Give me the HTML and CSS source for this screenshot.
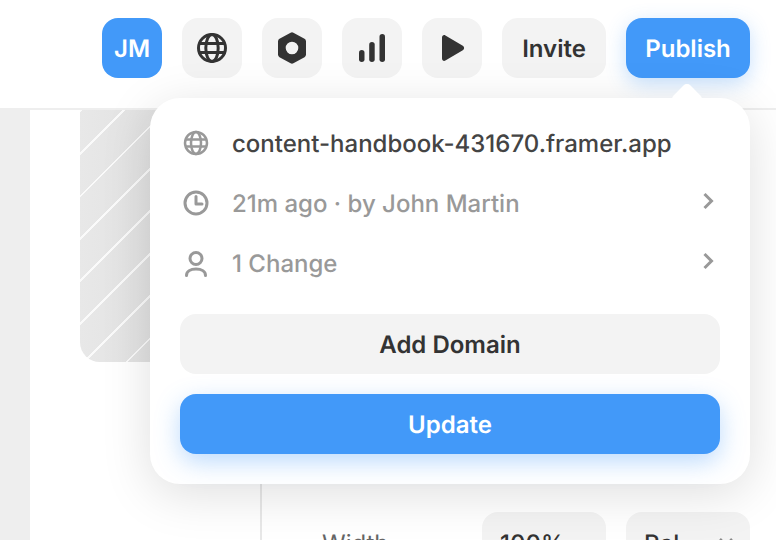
FILE: index.html
```html
<!DOCTYPE html>
<html lang="en">
<head>
<meta charset="utf-8">
<title>Publish</title>
<link rel="stylesheet" href="styles.css">
</head>
<body>
<div class="app">
  <header class="topbar">
    <div class="btn square avatar">JM</div>
    <div class="btn square"><svg width="32" height="32" viewBox="0 0 32 32" fill="none" stroke="#333" stroke-width="3"><circle cx="16" cy="16" r="13.5"/><ellipse cx="16" cy="16" rx="6.2" ry="13.5"/><path d="M3 11.5h26M3 20.5h26"/></svg></div>
    <div class="btn square"><svg width="32" height="32" viewBox="0 0 32 32"><path fill="#333" fill-rule="evenodd" d="M14.6 0.7a3 3 0 0 1 2.800 0l11.100 6.100a3 3 0 0 1 1.500 2.600v13.200a3 3 0 0 1-1.500 2.600l-11.100 6.100a3 3 0 0 1-2.800 0L3.500 25.200A3 3 0 0 1 2 22.600V9.400a3 3 0 0 1 1.500-2.600zM16 9.700a6.300 6.300 0 1 0 0 12.600 6.300 6.300 0 0 0 0-12.600z"/></svg></div>
    <div class="btn square"><svg width="32" height="32" viewBox="0 0 32 32" fill="#333"><rect x="3" y="18" width="5.500" height="12" rx="2.750"/><rect x="13.200" y="10" width="5.500" height="20" rx="2.750"/><rect x="23.500" y="2" width="5.500" height="28" rx="2.750"/></svg></div>
    <div class="btn square"><svg width="32" height="32" viewBox="0 0 32 32"><path fill="#333" d="M6 5.500c0-2 1.800-3 3.400-2.100l17.400 10.400a2.500 2.500 0 0 1 0 4.400L9.400 28.600C7.800 29.500 6 28.500 6 26.500z"/></svg></div>
    <div class="btn invite">Invite</div>
    <div class="btn publish">Publish</div>
  </header>

  <main class="workspace">
    <div class="gutter"></div>
    <section class="canvas"><div class="hatch"></div></section>
    <aside class="inspector">
      <div class="field-row">
        <span class="field-label">Width</span>
        <div class="field">100%</div>
        <div class="field select">Rel<svg class="select-arrow" width="16" height="16" viewBox="0 0 16 16" fill="none" stroke="#888" stroke-width="2.500"><path d="M2 5l6 6 6-6"/></svg></div>
      </div>
    </aside>
  </main>

  <div class="popover">
    <span class="caret"></span>
    <div class="info-row">
      <svg class="row-icon" width="28" height="28" viewBox="0 0 28 28" fill="none" stroke="#999" stroke-width="2.500"><circle cx="14" cy="14" r="11"/><ellipse cx="14" cy="14" rx="5" ry="11"/><path d="M3 10.500h22M3 17.500h22"/></svg>
      <span class="url">content-handbook-431670.framer.app</span>
    </div>
    <div class="info-row muted">
      <svg class="row-icon" width="28" height="28" viewBox="0 0 28 28" fill="none" stroke="#999" stroke-width="3"><circle cx="14" cy="14" r="11"/><path d="M14 7.500V15h6" stroke-linecap="round" stroke-linejoin="round"/></svg>
      <span class="grow">21m ago · by John Martin</span>
      <svg class="chev" width="14" height="18" viewBox="0 0 14 18" fill="none" stroke="#999" stroke-width="3"><path d="M2.500 2l7 7-7 7"/></svg>
    </div>
    <div class="info-row muted">
      <svg class="row-icon" width="28" height="28" viewBox="0 0 28 28" fill="none" stroke="#999" stroke-width="3"><circle cx="14" cy="9.500" r="6"/><path d="M4.500 26.500c0-4 4-6.500 9.500-6.500s9.500 2.500 9.500 6.500" stroke-linecap="round"/></svg>
      <span class="grow">1 Change</span>
      <svg class="chev" width="14" height="18" viewBox="0 0 14 18" fill="none" stroke="#999" stroke-width="3"><path d="M2.500 2l7 7-7 7"/></svg>
    </div>
    <div class="actions">
      <div class="wide secondary">Add Domain</div>
      <div class="wide primary">Update</div>
    </div>
  </div>
</div>
</body>
</html>
```
FILE: styles.css
```css
* { box-sizing: border-box; }
html, body { margin: 0; height: 100%; overflow: hidden; background: #fff; }
body { font-family: Inter, "Liberation Sans", sans-serif; color: #333; text-rendering: geometricPrecision; }

.app { position: relative; width: 776px; height: 540px; overflow: hidden; display: flex; flex-direction: column; }

.topbar {
  height: 110px;
  flex: none;
  display: flex;
  justify-content: flex-end;
  align-items: flex-start;
  gap: 20px;
  padding: 18px 26px 0 0;
  border-bottom: 2px solid #eee;
}
.btn {
  height: 60px;
  border-radius: 16px;
  background: #f3f3f3;
  display: flex;
  align-items: center;
  justify-content: center;
  font-size: 24px;
  font-weight: 600;
  color: #333;
}
.square { width: 60px; }
.invite { width: 104px; }
.publish { width: 124px; background: #4299f9; color: #fff; box-shadow: 0 6px 20px rgba(66, 153, 249, .3); }
.avatar { background: #4299f9; color: #fff; }

.workspace { flex: 1; display: flex; min-height: 0; }
.gutter { width: 30px; background: #eee; flex: none; }
.canvas { width: 232px; flex: none; padding-left: 50px; border-right: 2px solid #e8e8e8; }
.hatch {
  width: 130px;
  height: 252px;
  border-radius: 0 0 20px 20px;
  background-image:
    repeating-linear-gradient(-45deg, transparent 0, transparent 28px, #fafafa 28px, #fafafa 30px),
    linear-gradient(90deg, #e8e8e8, #dcdcdc);
}
.inspector { flex: 1; padding: 402px 26px 0 60px; }
.field-row { display: flex; gap: 20px; align-items: flex-start; }
.field-label { width: 140px; font-size: 24px; line-height: 60px; margin-top: 2px; color: #666; }
.field {
  width: 124px;
  height: 60px;
  flex: none;
  padding: 0 18px;
  background: #f3f3f3;
  border-radius: 16px;
  font-size: 24px;
  font-weight: 500;
  line-height: 64px;
  color: #333;
}
.select { position: relative; }
.select-arrow { position: absolute; right: 16px; top: 22px; }

.popover {
  position: absolute;
  left: 150px;
  top: 98px;
  width: 600px;
  height: 386px;
  padding: 15px 30px 30px;
  background: #fff;
  border-radius: 30px;
  box-shadow: 0 10px 50px rgba(0, 0, 0, .13);
}
.caret {
  position: absolute;
  right: 51px;
  top: -11px;
  width: 24px;
  height: 24px;
  border-radius: 5px;
  background: #fff;
  transform: rotate(45deg);
}
.info-row {
  height: 60px;
  display: flex;
  align-items: center;
  gap: 22px;
  font-size: 24px;
  font-weight: 500;
  color: #444;
}
.row-icon { flex: none; margin-left: 2px; }
.muted { color: #999; }
.grow { flex: 1; }
.chev { flex: none; margin-right: 4px; margin-top: -4px; }
.actions { display: flex; flex-direction: column; gap: 20px; margin-top: 21px; }
.wide {
  height: 60px;
  border-radius: 16px;
  display: flex;
  align-items: center;
  justify-content: center;
  font-size: 24px;
  font-weight: 600;
}
.secondary { background: #f3f3f3; color: #333; }
.primary { background: #4299f9; color: #fff; box-shadow: 0 8px 24px rgba(66, 153, 249, .35); }
```
